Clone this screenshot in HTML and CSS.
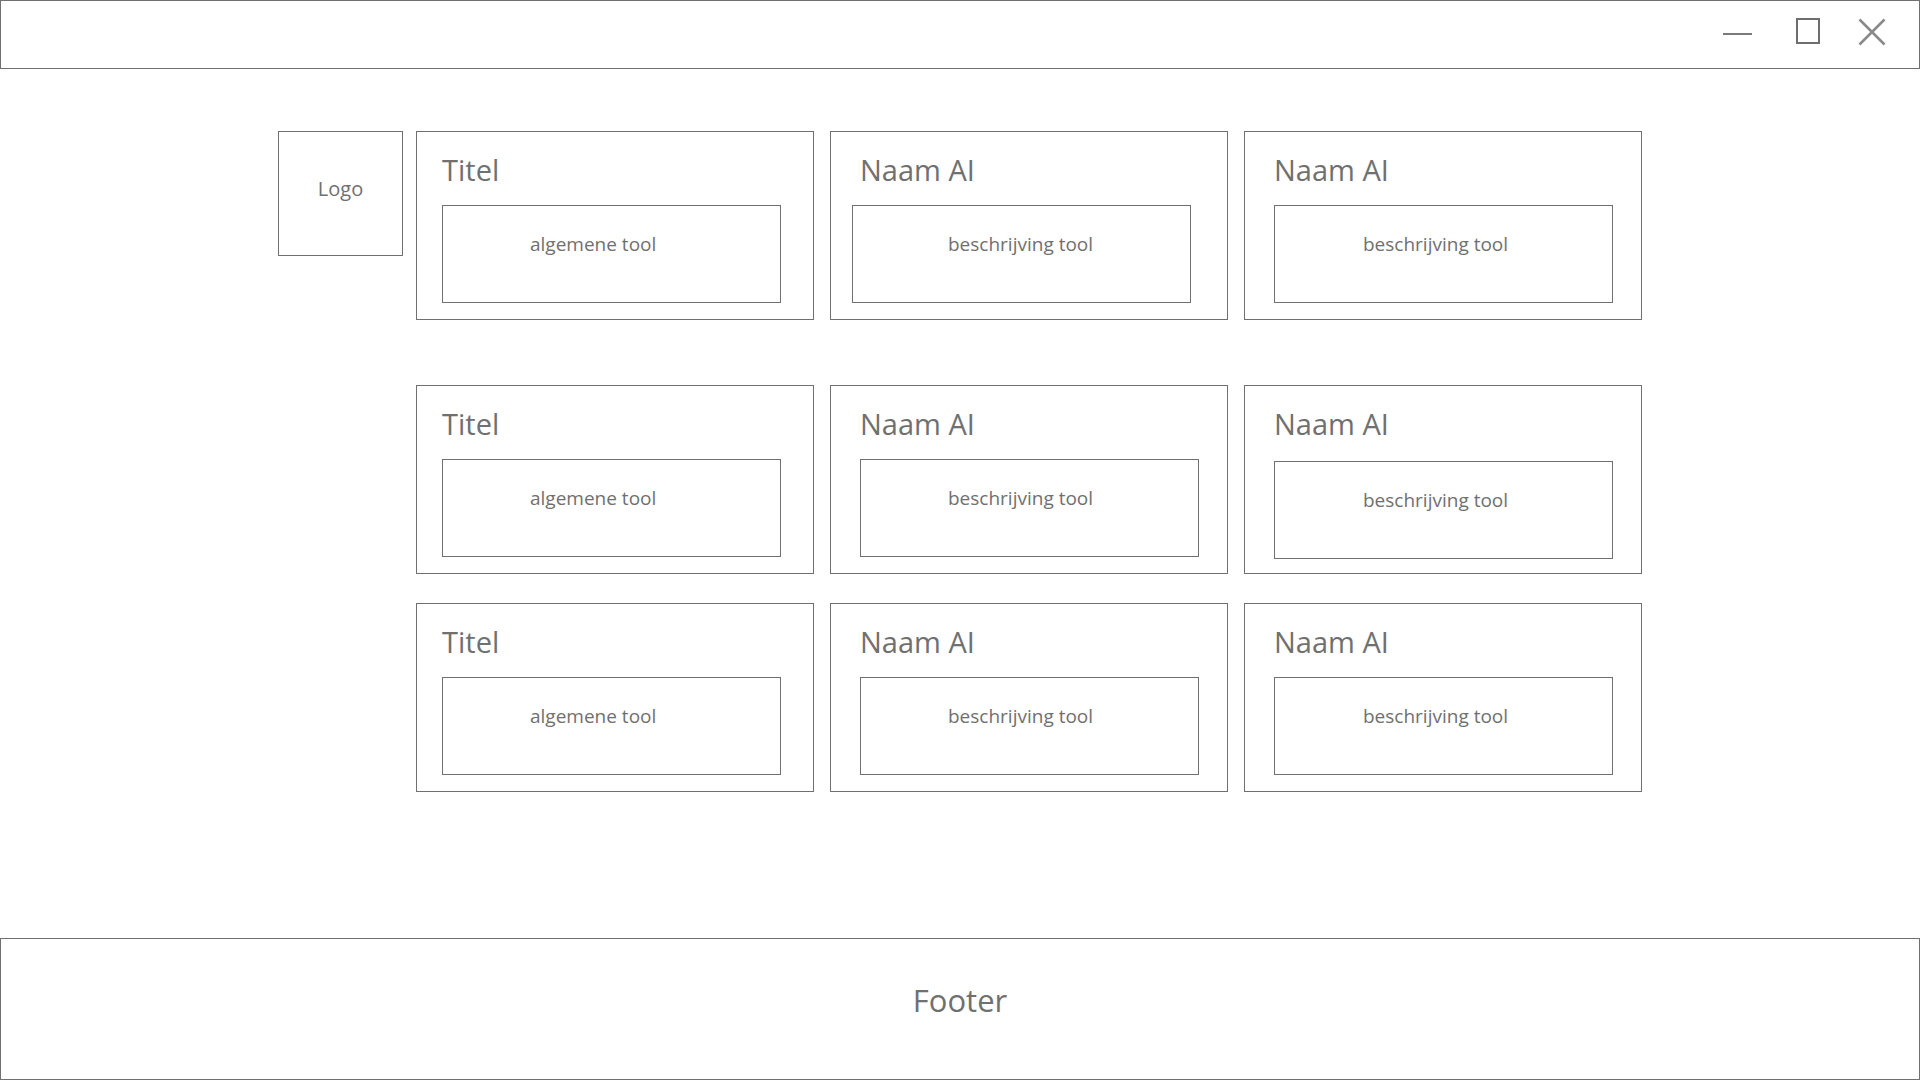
FILE: index.html
```html
<!DOCTYPE html>
<html lang="nl">
<head>
<meta charset="utf-8">
<title>AI tools</title>
<link rel="stylesheet" href="styles.css">
</head>
<body>
<div class="app">
  <header class="titlebar">
    <div class="controls">
      <span class="ctl ctl-min" aria-label="minimaliseren"></span>
      <span class="ctl ctl-max" aria-label="maximaliseren"></span>
      <svg class="ctl ctl-close" viewBox="0 0 28 28" width="28" height="28" aria-label="sluiten">
        <path d="M1.5 1.5 L26.5 26.5 M26.5 1.5 L1.5 26.5" stroke="#8a8a8a" stroke-width="2.6" fill="none"/>
      </svg>
    </div>
  </header>

  <main class="content">
    <div class="logo">Logo</div>
    <div class="grid">
      <div class="card card-a r1">
        <div class="card-title">Titel</div>
        <div class="tool in-a"><span>algemene tool</span></div>
      </div>
      <div class="card card-b r1">
        <div class="card-title">Naam AI</div>
        <div class="tool in-b1"><span>beschrijving tool</span></div>
      </div>
      <div class="card card-c r1">
        <div class="card-title">Naam AI</div>
        <div class="tool in-c"><span>beschrijving tool</span></div>
      </div>

      <div class="card card-a r2">
        <div class="card-title">Titel</div>
        <div class="tool in-a"><span>algemene tool</span></div>
      </div>
      <div class="card card-b r2">
        <div class="card-title">Naam AI</div>
        <div class="tool in-b"><span>beschrijving tool</span></div>
      </div>
      <div class="card card-c r2">
        <div class="card-title">Naam AI</div>
        <div class="tool in-c low"><span>beschrijving tool</span></div>
      </div>

      <div class="card card-a r3">
        <div class="card-title">Titel</div>
        <div class="tool in-a"><span>algemene tool</span></div>
      </div>
      <div class="card card-b r3">
        <div class="card-title">Naam AI</div>
        <div class="tool in-b"><span>beschrijving tool</span></div>
      </div>
      <div class="card card-c r3">
        <div class="card-title">Naam AI</div>
        <div class="tool in-c"><span>beschrijving tool</span></div>
      </div>
    </div>
  </main>

  <footer class="footer">Footer</footer>
</div>
</body>
</html>
```

FILE: styles.css
```css
* { box-sizing: border-box; }

html, body {
  margin: 0;
  padding: 0;
  background: #ffffff;
}

body {
  font-family: "Open Sans", "Noto Sans", "Liberation Sans", sans-serif;
  color: #707070;
}

.app {
  width: 1920px;
  height: 1080px;
  display: flex;
  flex-direction: column;
}

/* title bar */
.titlebar {
  height: 69px;
  border: 1px solid #707070;
  display: flex;
  justify-content: flex-end;
  flex-shrink: 0;
}

.controls {
  display: flex;
  align-items: flex-start;
  padding-top: 17px;
  padding-right: 33px;
}

.ctl { display: block; }

.ctl-min {
  width: 29px;
  height: 2px;
  background: #7a7a7a;
  margin-top: 15px;
  margin-right: 44px;
}

.ctl-max {
  width: 24px;
  height: 26px;
  border: 2px solid #6e6e6e;
  margin-right: 38px;
}

.ctl-close {
  width: 28px;
  height: 28px;
}

/* main content */
.content {
  flex: 1;
  display: flex;
  align-items: flex-start;
  padding-top: 62px;
  padding-left: 278px;
}

.logo {
  width: 125px;
  height: 125px;
  border: 1px solid #707070;
  display: flex;
  align-items: center;
  justify-content: center;
  font-size: 20px;
  margin-right: 13px;
  padding-bottom: 10px;
}

.grid {
  display: grid;
  grid-template-columns: repeat(3, 398px);
  grid-auto-rows: auto;
  column-gap: 16px;
}

.grid .r2 { margin-top: 65px; }
.grid .r3 { margin-top: 29px; }

.card {
  height: 189px;
  border: 1px solid #707070;
  display: flex;
  flex-direction: column;
  padding-top: 18px;
}

.card-title {
  font-size: 29px;
  line-height: 40px;
  height: 55px;
  flex-shrink: 0;
}

.card-a .card-title { padding-left: 25px; }
.card-b .card-title { padding-left: 29px; }
.card-c .card-title { padding-left: 29px; }

.tool {
  width: 339px;
  height: 98px;
  flex-shrink: 0;
  border: 1px solid #707070;
  font-size: 19px;
  line-height: 26px;
  padding-top: 25px;
}

.tool.low { margin-top: 2px; }

.in-a { margin-left: 25px; padding-left: 87px; }
.in-b1 { margin-left: 21px; padding-left: 95px; }
.in-b { margin-left: 29px; padding-left: 87px; }
.in-c { margin-left: 29px; padding-left: 88px; }

/* footer */
.footer {
  height: 142px;
  border: 1px solid #707070;
  display: flex;
  align-items: center;
  justify-content: center;
  font-size: 31px;
  flex-shrink: 0;
  padding-bottom: 18px;
}
```
